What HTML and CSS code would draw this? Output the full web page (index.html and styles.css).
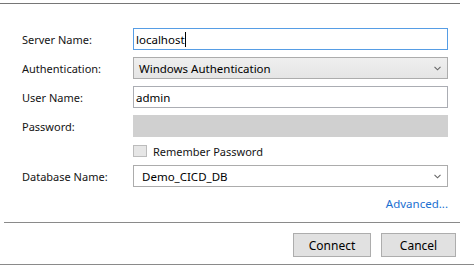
FILE: index.html
```html
<!DOCTYPE html>
<html lang="en">

<head>
    <meta charset="UTF-8">
    <meta name="viewport" content="width=device-width, initial-scale=1.0">
    <title>Connect</title>

    <link rel="stylesheet" href="styles.css">
</head>

<body>
    <div class="dialog">
        <div class="form">
            <label class="label">Server Name:</label>
            <div class="field focused">localhost<span class="caret"></span></div>

            <label class="label">Authentication:</label>
            <div class="select">
                <span class="select-text">Windows Authentication</span>
                <svg class="chevron" width="7" height="5" viewBox="0 0 7 5">
                    <path d="M0.5 0.8 L3.5 3.8 L6.5 0.8" fill="none" stroke="#666" stroke-width="1.1" />
                </svg>
            </div>

            <label class="label">User Name:</label>
            <div class="field">admin</div>

            <label class="label">Password:</label>
            <div class="field disabled"></div>

            <span></span>
            <div class="check-row">
                <span class="checkbox"></span>
                <span>Remember Password</span>
            </div>

            <label class="label">Database Name:</label>
            <div class="select combo">
                <span class="select-text">Demo_CICD_DB</span>
                <svg class="chevron" width="7" height="5" viewBox="0 0 7 5">
                    <path d="M0.5 0.8 L3.5 3.8 L6.5 0.8" fill="none" stroke="#666" stroke-width="1.1" />
                </svg>
            </div>
        </div>

        <div class="advanced"><a href="#">Advanced...</a></div>

        <div class="footer">
            <button class="btn btn-connect">Connect</button>
            <button class="btn btn-cancel">Cancel</button>
        </div>
    </div>
    <div class="bottom-line"></div>
</body>

</html>
```

FILE: styles.css
```css
* {
    margin: 0;
    padding: 0;
    box-sizing: border-box;
}

body {
    font-family: "Noto Sans", "Open Sans", sans-serif;
    font-size: 11px;
    color: #141414;
    background-color: #ffffff;
    height: 265px;
    overflow: hidden;
}

.dialog {
    width: 460px;
    padding-top: 3px;
}

.form {
    border-top: 1px solid #767676;
    padding: 24px 0 0 22px;
    display: grid;
    grid-template-columns: 111px 315px;
    grid-template-rows: 22px 22px 22px 22px 14px 22px;
    row-gap: 7px;
}

.label {
    display: flex;
    align-items: center;
}

.field {
    display: flex;
    align-items: center;
    border: 1px solid #abadb3;
    background-color: #ffffff;
    padding-left: 2px;
    font-size: 11.5px;
    color: #000;
}

.field.focused {
    border-color: #569de5;
}

.caret {
    display: inline-block;
    width: 1px;
    height: 15px;
    background-color: #000;
}

.field.disabled {
    border-color: #d0d0d0;
    background-color: #d0d0d0;
}

.select {
    display: flex;
    align-items: center;
    justify-content: space-between;
    border: 1px solid #acacac;
    background: linear-gradient(#efefef, #e5e5e5);
    padding: 0 6px 0 5px;
    font-size: 11.5px;
    color: #000;
}

.select.combo {
    background: #ffffff;
    padding-left: 8px;
}

.check-row {
    display: flex;
    align-items: center;
    gap: 6px;
}

.checkbox {
    width: 14px;
    height: 12px;
    border: 1px solid #bcbcbc;
    background-color: #e6e6e6;
}

.advanced {
    display: flex;
    justify-content: flex-end;
    padding: 9px 12px 0 0;
    height: 35px;
}

.advanced a {
    color: #1a6fd1;
    text-decoration: none;
    font-size: 11.5px;
}

.footer {
    margin-left: 4px;
    border-top: 1px solid #8a8a8a;
    width: 456px;
    height: 42px;
    display: flex;
    justify-content: flex-end;
    gap: 10px;
    padding: 10px 4px 0 0;
}

.bottom-line {
    width: 474px;
    border-top: 1px solid #8a8a8a;
}

.btn {
    width: 78px;
    height: 24px;
    border: 1px solid #adadad;
    background-color: #e1e1e1;
    font-family: "Noto Sans", "Open Sans", sans-serif;
    font-size: 12px;
    color: #000;
}

.btn-cancel {
    width: 75px;
}
```
